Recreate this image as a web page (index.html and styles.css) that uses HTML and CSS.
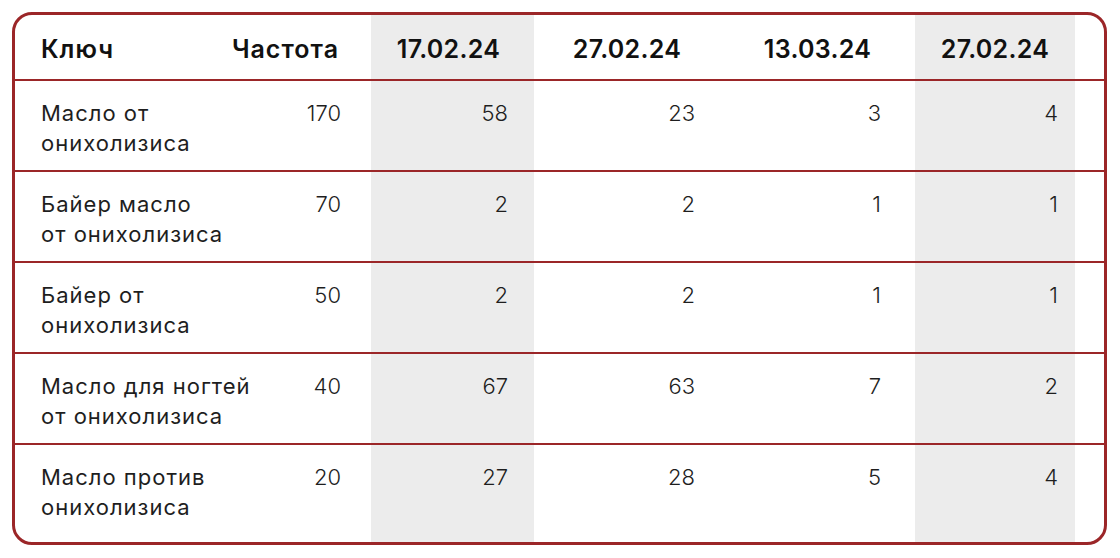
FILE: index.html
```html
<!DOCTYPE html>
<html lang="ru">
<head>
<meta charset="utf-8">
<link rel="stylesheet" href="styles.css">
</head>
<body>
<div class="page">
  <div class="table">
    <div class="cell head hkey">Ключ</div>
    <div class="cell head hfreq">Частота</div>
    <div class="cell head date shade">17.02.24</div>
    <div class="cell head date">27.02.24</div>
    <div class="cell head date">13.03.24</div>
    <div class="cell head date shade">27.02.24</div>
    <div class="cell head pad"></div>

    <div class="cell key">Масло от<br>онихолизиса</div>
    <div class="cell num freq">170</div>
    <div class="cell num c3 shade">58</div>
    <div class="cell num c4">23</div>
    <div class="cell num c5">3</div>
    <div class="cell num c6 shade">4</div>
    <div class="cell pad"></div>

    <div class="cell key">Байер масло<br>от онихолизиса</div>
    <div class="cell num freq">70</div>
    <div class="cell num c3 shade">2</div>
    <div class="cell num c4">2</div>
    <div class="cell num c5">1</div>
    <div class="cell num c6 shade">1</div>
    <div class="cell pad"></div>

    <div class="cell key">Байер от<br>онихолизиса</div>
    <div class="cell num freq">50</div>
    <div class="cell num c3 shade">2</div>
    <div class="cell num c4">2</div>
    <div class="cell num c5">1</div>
    <div class="cell num c6 shade">1</div>
    <div class="cell pad"></div>

    <div class="cell key">Масло для ногтей<br>от онихолизиса</div>
    <div class="cell num freq">40</div>
    <div class="cell num c3 shade">67</div>
    <div class="cell num c4">63</div>
    <div class="cell num c5">7</div>
    <div class="cell num c6 shade">2</div>
    <div class="cell pad"></div>

    <div class="cell key last">Масло против<br>онихолизиса</div>
    <div class="cell num freq last">20</div>
    <div class="cell num c3 shade last">27</div>
    <div class="cell num c4 last">28</div>
    <div class="cell num c5 last">5</div>
    <div class="cell num c6 shade last">4</div>
    <div class="cell pad last"></div>
  </div>
</div>
</body>
</html>
```

FILE: styles.css
```css
html, body {
  margin: 0;
  padding: 0;
  background: #ffffff;
}

.page {
  padding: 12px 13px 0 12px;
}

.table {
  width: 1089px;
  border: 3px solid #9b2628;
  border-radius: 20px;
  overflow: hidden;
  display: grid;
  grid-template-columns: 240px 116px 163px 186px 195px 160px 1fr;
  grid-template-rows: 66px 91px 91px 91px 91px 97px;
  font-family: "Inter", "Noto Sans", sans-serif;
  color: #1e1e1e;
}

.cell {
  border-bottom: 2px solid #9b2628;
  font-size: 22px;
  line-height: 30px;
  box-sizing: border-box;
  white-space: nowrap;
}

.cell.last {
  border-bottom: none;
}

.shade {
  background: #ececec;
}

.head {
  font-weight: 600;
  font-size: 25px;
  color: #111111;
  display: flex;
  align-items: center;
  padding-top: 3px;
}

.hkey,
.hfreq {
  letter-spacing: 1px;
}

.hkey {
  padding-left: 26px;
}

.hfreq {
  justify-content: flex-end;
  padding-right: 32px;
}

.date {
  justify-content: center;
  letter-spacing: 0.3px;
}

.date:nth-child(3) {
  padding-right: 8px;
}

.key {
  padding: 17px 0 0 26px;
  letter-spacing: 1px;
}

.num {
  padding-top: 17px;
  text-align: right;
  font-weight: 300;
}

.num.freq { padding-right: 30px; }
.num.c3 { padding-right: 26px; }
.num.c4 { padding-right: 25px; }
.num.c5 { padding-right: 34px; }
.num.c6 { padding-right: 17px; }
```
